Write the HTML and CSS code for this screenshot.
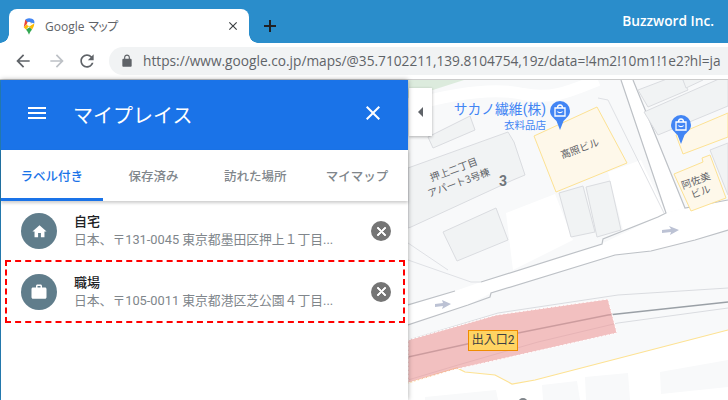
FILE: index.html
```html
<!DOCTYPE html>
<html lang="ja">
<head>
    <meta charset="UTF-8">
    <title>Google マップ</title>
    <link rel="stylesheet" href="styles.css">
</head>
<body>
    <!-- browser tabs -->
    <div class="tabstrip">
        <div class="tab">
            <svg class="favicon" viewBox="0 0 16 22" width="12" height="17">
                <path fill="#34a853" d="M8 22c-1-3-2.500-5-4-7l5-3 3 3c-1.500 2-3 4-4 7z"/>
                <path fill="#fbbc04" d="M1 12c1 1 2 2 3 3l8-9-3-2z"/>
                <path fill="#ea4335" d="M3 2 1 12 8 4z"/>
                <path fill="#4285f4" d="M8 0C6 0 4 1 3 2l3.500 3.500L12 6l3 1c1-3-.5-7-7-7z"/>
                <path fill="#fbbc04" d="M15 7c0 3-1.500 6-3 8L8 11z"/>
                <circle cx="8" cy="7.500" r="2.700" fill="#fff"/>
            </svg>
            <span class="tab_title">Google <small>マップ</small></span>
            <svg class="tab_close" viewBox="0 0 24 24" width="14" height="14"><path d="M19 6.410 17.590 5 12 10.590 6.410 5 5 6.410 10.590 12 5 17.590 6.410 19 12 13.410 17.590 19 19 17.590 13.410 12z"/></svg>
        </div>
        <svg class="new_tab" viewBox="0 0 14 14" width="14" height="14"><path d="M6 1h2v5h5v2H8v5H6V8H1V6h5z"/></svg>
        <div class="brand">Buzzword Inc.</div>
    </div>

    <!-- address bar -->
    <div class="toolbar">
        <svg class="nav" viewBox="0 0 24 24" width="20" height="20"><path fill="#5f6368" d="M20 11H7.830l5.590-5.590L12 4l-8 8 8 8 1.410-1.410L7.830 13H20v-2z"/></svg>
        <svg class="nav" viewBox="0 0 24 24" width="20" height="20"><path fill="#bdc1c6" d="M4 11h12.170l-5.590-5.590L12 4l8 8-8 8-1.410-1.410L16.170 13H4v-2z"/></svg>
        <svg class="nav" viewBox="0 0 24 24" width="20" height="20"><path fill="#5f6368" d="M17.650 6.350C16.200 4.900 14.210 4 12 4c-4.420 0-7.990 3.580-7.990 8s3.570 8 7.990 8c3.730 0 6.840-2.550 7.730-6h-2.080c-.82 2.330-3.040 4-5.650 4-3.310 0-6-2.690-6-6s2.690-6 6-6c1.660 0 3.140.69 4.220 1.780L13 11h7V4l-2.350 2.350z"/></svg>
        <div class="url">
            <svg viewBox="0 0 24 24" width="14" height="14"><path fill="#5f6368" d="M18 8h-1V6c0-2.760-2.240-5-5-5S7 3.240 7 6v2H6c-1.100 0-2 .9-2 2v10c0 1.100.9 2 2 2h12c1.100 0 2-.9 2-2V10c0-1.100-.9-2-2-2zM9 6c0-1.660 1.340-3 3-3s3 1.340 3 3v2H9V6z"/></svg>
            <span>https://www.google.co.jp/maps/@35.7102211,139.8104754,19z/data=!4m2!10m1!1e2?hl=ja</span>
        </div>
    </div>

    <div class="main">
        <div class="sidebar">
            <div class="side_head">
                <svg viewBox="0 0 24 24" width="24" height="24"><path fill="#fff" d="M3 18h18v-2H3v2zm0-5h18v-2H3v2zm0-7v2h18V6H3z"/></svg>
                <h1>マイプレイス</h1>
                <svg viewBox="0 0 24 24" width="24" height="24"><path fill="#fff" d="M19 6.410 17.590 5 12 10.590 6.410 5 5 6.410 10.590 12 5 17.590 6.410 19 12 13.410 17.590 19 19 17.590 13.410 12z"/></svg>
            </div>
            <ul class="side_tabs">
                <li class="on">ラベル付き</li>
                <li>保存済み</li>
                <li>訪れた場所</li>
                <li>マイマップ</li>
            </ul>
            <ul class="place_list">
                <li class="place">
                    <span class="avatar">
                        <svg viewBox="0 0 24 24" width="17" height="17"><path fill="#fff" d="M10 20v-6h4v6h5v-8h3L12 3 2 12h3v8z"/></svg>
                    </span>
                    <div class="place_text">
                        <b>自宅</b>
                        <span>日本、〒131-0045 東京都墨田区押上１丁目...</span>
                    </div>
                    <span class="remove">
                        <svg viewBox="0 0 24 24"><path fill="#fff" d="M19 6.410 17.590 5 12 10.590 6.410 5 5 6.410 10.590 12 5 17.590 6.410 19 12 13.410 17.590 19 19 17.590 13.410 12z" stroke="#fff" stroke-width="1.500"/></svg>
                    </span>
                </li>
                <li class="place marked">
                    <span class="avatar">
                        <svg viewBox="0 0 24 24" width="18" height="18"><path fill="#fff" d="M20 6h-4V4c0-1.110-.89-2-2-2h-4c-1.110 0-2 .89-2 2v2H4c-1.110 0-1.990.89-1.990 2L2 19c0 1.110.89 2 2 2h16c1.110 0 2-.89 2-2V8c0-1.110-.89-2-2-2zm-6 0h-4V4h4v2z"/></svg>
                    </span>
                    <div class="place_text">
                        <b>職場</b>
                        <span>日本、〒105-0011 東京都港区芝公園４丁目...</span>
                    </div>
                    <span class="remove">
                        <svg viewBox="0 0 24 24"><path fill="#fff" d="M19 6.410 17.590 5 12 10.590 6.410 5 5 6.410 10.590 12 5 17.590 6.410 19 12 13.410 17.590 19 19 17.590 13.410 12z" stroke="#fff" stroke-width="1.500"/></svg>
                    </span>
                </li>
            </ul>
        </div>

        <div class="map">
            <svg class="map_art" viewBox="0 0 320 320" width="320" height="320">
                <rect width="320" height="320" fill="#f8f9fa"/>
                <path fill="#dcebdd" d="M0 0h56L0 18z"/>
                <!-- roads -->
                <path fill="none" stroke="#fff" stroke-width="12" d="M0 26C50 12 90 8 115 14c30 6 50-4 75-14"/>
                <path fill="#fff" d="M213 0 258 133 277 128 225 0z"/>
                <path fill="#fff" d="M0 225 47 211 73 202 193 164 258 133 277 128 320 120V150L287 160 243 171 207 175 83 213 60 225 0 245z"/>
                <path fill="#fff" d="M98 133 147 114 165 160 105 190z"/>
                <path fill="#fff" d="M200 92 233 80 258 133 215 150z"/>
                <path fill="#fff" d="M0 303 49 288 57 292 87 295 104 304 127 300 320 250V320H0z"/>
                <path fill="none" stroke="#dfe1e5" d="M0 180 63 202 73 202M0 163 40 190"/>
                <path fill="none" stroke="#dfe1e5" d="M190 18 200 20 256 133"/>
                <!-- road edges -->
                <g fill="none" stroke="#bdc1c6" stroke-width="1.200">
                    <path d="M213 0 258 133 250 137 195 159 194 164 73 202M47 211 0 225"/>
                    <path d="M225 0 277 128 320 120"/>
                    <path d="M0 245 60 225 82 217 83 213 207 175 243 171 287 160 320 150"/>
                </g>
                <!-- buildings -->
                <g fill="#f1f3f4" stroke="#dadce0">
                    <path d="M0 88 100 52 106 62 117 95 105 100 3 147 0 148z"/>
                    <path d="M20 57 62 36 67 50 25 68z"/>
                    <path d="M151 113 175 106 187 152 163 157z"/>
                    <path d="M178 107 202 101 213 150 189 157z"/>
                    <path d="M35 152 88 128 100 160 49 181z"/>
                    <path d="M230 10 272-6 280 10 240 27z"/>
                    <path d="M236 32 320-5V26L250 55z"/>
                    <path d="M275 0 290-6 295 0 278 8z"/>
                    <path d="M302 70 320 63V115z"/>
                </g>
                <g fill="#fef8ea" stroke="#fde293">
                    <path d="M126 56 189 27 219 83 148 112z"/>
                    <path d="M268 55 320 33V57L275 74z"/>
                    <path d="M266 94 295 82 294 78 302 75 318 118 283 131z"/>
                </g>
                <!-- blocks south of the tracks -->
                <g fill="#f8f9fa">
                    <path d="M134 305 169 301 172 320H135z"/>
                    <path d="M177 297 220 293 222 320H178z"/>
                    <path d="M252 292 320 280V307L253 314z"/>
                    <path d="M17 317 88 310 90 320H17z"/>
                </g>
                <circle cx="115" cy="323" r="5" fill="#80868b"/>
                <path fill="none" stroke="#fde293" stroke-width="1.200" d="M0 303 49 288 57 292 87 295 104 304 127 300 320 250"/>
                <!-- tracks -->
                <path fill="none" stroke="#dadce0" d="M0 260 90 233 210 215 320 208"/>
                <path fill="none" stroke="#dadce0" d="M0 300 50 285 130 262 210 243 320 228"/>
                <path fill="none" stroke="#9aa0a6" stroke-width="1.600" d="M0 277 100 255 200 235 320 222"/>
                <!-- highlighted station area -->
                <path fill="#ef9a9a" fill-opacity=".6" stroke="#fff" stroke-dasharray="3 1" d="M0 260 88 235 200 219 209 253 45 290 0 303z"/>
                <path fill="#bcc2d4" d="M34 220l9 4-9 5 1-3-8 1v-3l8-1z"/>
                <path fill="#bcc2d4" d="M261 146l10 4-9 5 1-3-9 1v-3l9-1z"/>
                <!-- labels -->
                <g class="map_text" font-size="10" text-anchor="middle">
                    <text transform="translate(173 72) rotate(-20)">高照ビル</text>
                    <text transform="translate(47 93) rotate(-20)">押上二丁目</text>
                    <text transform="translate(52 106) rotate(-20)">アパート3号棟</text>
                    <text transform="translate(289 104) rotate(-20)">阿佐美</text>
                    <text transform="translate(294 115) rotate(-20)">ビル</text>
                </g>
                <text class="lot_no" x="95" y="106" text-anchor="middle">3</text>
                <text class="shop_name" x="138" y="34" text-anchor="end">サカノ繊維(株)</text>
                <text class="shop_kind" x="138" y="49" text-anchor="end">衣料品店</text>
                <g>
                    <path fill="#4285f4" d="M142 31a10 10 0 1 1 20 0c0 5-4 7-6.500 10L152 50l-3.500-9C146 38 142 36 142 31z"/>
                    <path fill="none" stroke="#fff" stroke-width="1.300" d="M147 28h10v8h-10zM149.500 28c0-4 5-4 5 0M149.500 31.500c1 1.500 4 1.500 5 0"/>
                </g>
                <g>
                    <path fill="#4285f4" d="M263 45a10 10 0 1 1 20 0c0 5-4 7-6.500 10L273 64l-3.500-9C267 52 263 50 263 45z"/>
                    <path fill="none" stroke="#fff" stroke-width="1.300" d="M268 42h10v8h-10zM270.500 42c0-4 5-4 5 0M270.500 45.500c1 1.500 4 1.500 5 0"/>
                </g>
            </svg>
            <div class="exit_tag">出入口2</div>
            <div class="collapse"><i></i></div>
        </div>
    </div>
</body>
</html>
```

FILE: styles.css
```css
*{margin: 0;padding: 0;box-sizing: border-box;}
li{list-style-type: none;}
html,body{width: 728px;height: 400px;overflow: hidden;background: #fff;}
body{font-family: Roboto,"Noto Sans CJK JP",sans-serif;}

.tabstrip{display: flex;align-items: flex-end;height: 43px;padding-left: 9px;background: #2a8dcb;}
.tab{position: relative;display: flex;align-items: center;width: 240px;height: 34px;padding: 0 0 0 14px;background: #fff;border-radius: 8px 8px 0 0;}
.tab:before,.tab:after{content: "";position: absolute;bottom: 0;width: 9px;height: 9px;}
.tab:before{left: -9px;background: radial-gradient(circle at 0 0,transparent 8.5px,#fff 9px);}
.tab:after{right: -9px;background: radial-gradient(circle at 100% 0,transparent 8.5px,#fff 9px);}
.tab_title{flex: 1;margin-left: 10px;font-size: 12px;color: #5f6368;font-family: "Open Sans","Noto Sans CJK JP",sans-serif;}
.tab_title small{font-size: 12px;letter-spacing: -2.5px;}
.tab_close{margin-right: 9px;fill: #3c4043;}
.new_tab{margin: 0 0 10px 14px;fill: #202124;}
.brand{margin: 0 14px 13px auto;color: #fff;font-size: 13.7px;font-weight: 600;font-family: "Open Sans",sans-serif;}

.toolbar{display: flex;align-items: center;height: 37px;padding: 0 0 1px 13px;gap: 14px;background: #fff;border-bottom: 1px solid #ccc;}
.nav{flex: none;}
.nav + .nav + .nav{margin-left: -4px;}
.url{display: flex;flex: 1;align-items: center;height: 28px;margin: 0 -20px 0 -2px;padding-left: 11px;gap: 9px;white-space: nowrap;background: #f1f3f4;border-radius: 14px;}
.url span{font-size: 13.7px;color: #5f6368;font-family: "Open Sans",sans-serif;}

.main{display: flex;height: 320px;border-left: 1px solid #2a8dcb;}
.sidebar{position: relative;z-index: 2;flex: none;width: 407px;background: #fff;box-shadow: 0 0 5px rgba(0,0,0,.35);}
.side_head{display: flex;align-items: center;height: 70px;padding: 0 23px 5px 24px;background: #1a73e8;color: #fff;}
.side_head h1{flex: 1;margin: 4px 0 0 24px;font-size: 20px;font-weight: 400;}
.side_tabs{position: relative;display: flex;height: 51px;box-shadow: 0 2px 3px rgba(0,0,0,.2);}
.side_tabs li{flex: 1;text-align: center;line-height: 54px;font-size: 12.5px;color: #80868b;font-weight: 500;}
.side_tabs .on{color: #1a73e8;border-bottom: 3px solid #1a73e8;}

.place{display: flex;align-items: center;height: 60px;padding: 0 17px 0 20px;}
.avatar{display: flex;align-items: center;justify-content: center;width: 36px;height: 36px;border-radius: 50%;background: #607d8b;}
.place_text{flex: 1;margin-left: 17px;}
.place_text b{display: block;font-size: 13px;line-height: 18px;font-weight: 500;color: #202124;}
.place_text span{display: block;font-size: 12.8px;line-height: 18px;color: #80868b;white-space: nowrap;}
.remove{display: flex;align-items: center;justify-content: center;width: 20px;height: 20px;border-radius: 50%;background: #757575;}
.remove svg{width: 15px;height: 15px;}
.marked{height: 63px;margin: -1px 3px 0 4px;padding: 0 12px 0 14px;border: 2px dashed #f00;}

.map{position: relative;flex: 1;overflow: hidden;background: #f8f9fa;}
.map_art{display: block;}
.map_text text{fill: #5f6368;font-family: "Noto Sans CJK JP",sans-serif;}
.lot_no{fill: #70757a;font-size: 14px;font-weight: 700;font-family: Roboto,sans-serif;}
.shop_name{fill: #4285f4;font-size: 13.8px;font-family: Roboto,"Noto Sans CJK JP",sans-serif;}
.shop_kind{fill: #4285f4;font-size: 10.5px;font-family: "Noto Sans CJK JP",sans-serif;}
.exit_tag{position: absolute;left: 60px;top: 250px;width: 50px;height: 21px;line-height: 19px;text-align: center;font-size: 12px;color: #3c4043;background: #ffd463;border: 1px solid #f08c00;}
.collapse{position: absolute;left: 1px;top: 8px;display: flex;align-items: center;justify-content: center;width: 23px;height: 48px;background: #fff;box-shadow: 0 1px 3px rgba(0,0,0,.3);}
.collapse i{border: 5px solid transparent;border-left: 0;border-right: 5px solid #5f6368;}
```
